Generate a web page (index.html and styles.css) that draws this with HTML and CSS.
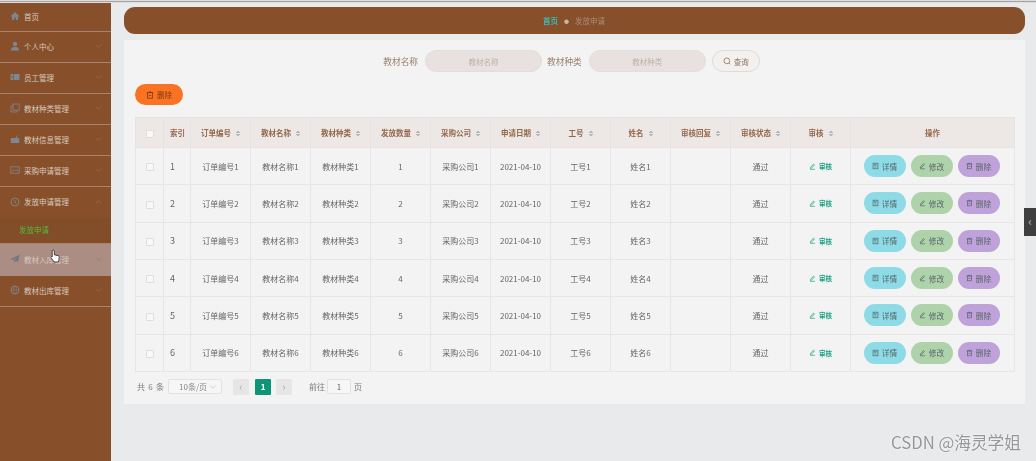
FILE: index.html
```html
<!DOCTYPE html>
<html lang="zh-CN">
<head>
<meta charset="utf-8">
<title>发放申请</title>
<link rel="stylesheet" href="styles.css">
</head>
<body>
<svg class="defs" width="0" height="0" aria-hidden="true">
  <symbol id="i-doc" viewBox="0 0 10 10"><rect x="1.5" y="1" width="7" height="8" fill="none" stroke="currentColor"/><path d="M3.500 6.500h3" stroke="currentColor"/><rect x="3.500" y="3" width="3" height="1.500" fill="none" stroke="currentColor" stroke-width=".7"/></symbol>
  <symbol id="i-edit" viewBox="0 0 10 10"><path d="M2 6.500 6.500 1.500l1.300 1.200-4.500 5H2zM1.500 9h7" fill="none" stroke="currentColor"/></symbol>
  <symbol id="i-del" viewBox="0 0 10 10"><rect x="2" y="2" width="6" height="7" fill="none" stroke="currentColor"/><path d="M3.800 1h2.400M1 2h8M3.500 5.500h3" fill="none" stroke="currentColor"/></symbol>
  <symbol id="i-chev" viewBox="0 0 10 6"><path d="M1 1l4 4 4-4" fill="none" stroke="currentColor"/></symbol>
</svg>
<div class="app">
  <div class="topline"></div>
  <div class="layout">
    <nav class="sidebar">
      <div class="item item-first"><svg class="ico" viewBox="0 0 10 10"><path d="M5 1 .5 5.500H2V9h2.200V6.500h1.600V9H8V5.500h1.500z" fill="currentColor"/></svg><span>首页</span></div>
      <div class="item"><svg class="ico" viewBox="0 0 10 10"><circle cx="5" cy="3" r="2.200" fill="currentColor"/><path d="M1 9.500c0-3 1.500-3.600 4-3.600s4 .6 4 3.600z" fill="currentColor"/></svg><span>个人中心</span><svg class="chev"><use href="#i-chev"/></svg></div>
      <div class="item"><svg class="ico" viewBox="0 0 10 10"><path d="M.5 2h9v6h-9z" fill="currentColor"/><path d="M3.500 2v6M.5 5h3" stroke="#87502b" stroke-width=".6"/></svg><span>员工管理</span><svg class="chev"><use href="#i-chev"/></svg></div>
      <div class="item"><svg class="ico" viewBox="0 0 10 10"><rect x="3" y="1" width="6.200" height="6.200" fill="none" stroke="currentColor" stroke-width=".8"/><path d="M3 3H1v6h6V7" fill="none" stroke="currentColor" stroke-width=".8"/></svg><span>教材种类管理</span><svg class="chev"><use href="#i-chev"/></svg></div>
      <div class="item"><svg class="ico" viewBox="0 0 10 10"><path d="M.8 4h8.400v5H.8z" fill="currentColor"/><path d="M6 4 7.500 1.500" stroke="currentColor"/></svg><span>教材信息管理</span><svg class="chev"><use href="#i-chev"/></svg></div>
      <div class="item"><svg class="ico" viewBox="0 0 10 10"><rect x=".8" y="1.800" width="8.400" height="6.400" fill="none" stroke="currentColor" stroke-width=".8"/><path d="M2 7l2-2.500L5.500 6 7 4.500 8.500 7" fill="none" stroke="currentColor" stroke-width=".7"/></svg><span>采购申请管理</span><svg class="chev"><use href="#i-chev"/></svg></div>
      <div class="item item-open"><svg class="ico" viewBox="0 0 10 10"><circle cx="5" cy="5" r="4" fill="none" stroke="currentColor" stroke-width=".9"/><path d="M5 3v3h1.500" fill="none" stroke="currentColor" stroke-width=".8"/></svg><span>发放申请管理</span><svg class="chev chev-up"><use href="#i-chev"/></svg></div>
      <div class="submenu"><span>发放申请</span></div>
      <div class="item item-hover"><svg class="ico" viewBox="0 0 10 10"><path d="M9.500.8.5 5l2.600 1L8 2.500 4 6.600V9l1.600-2L8 8z" fill="currentColor"/></svg><span>教材入库管理</span><svg class="chev"><use href="#i-chev"/></svg></div>
      <div class="item"><svg class="ico" viewBox="0 0 10 10"><circle cx="5" cy="5" r="4" fill="none" stroke="currentColor" stroke-width=".9"/><path d="M1 5h8M5 1c-2 2.500-2 5.500 0 8M5 1c2 2.500 2 5.500 0 8" fill="none" stroke="currentColor" stroke-width=".5"/></svg><span>教材出库管理</span><svg class="chev"><use href="#i-chev"/></svg></div>
    </nav>
    <main class="main">
      <header class="crumb"><span class="crumb-home">首页</span><span class="crumb-sep">●</span><span class="crumb-cur">发放申请</span></header>
      <section class="card">
        <form class="search">
          <label class="search-label">教材名称</label>
          <div class="search-input">教材名称</div>
          <label class="search-label">教材种类</label>
          <div class="search-input">教材种类</div>
          <button class="search-btn" type="button"><svg class="s-ico" viewBox="0 0 10 10"><circle cx="4.800" cy="4.800" r="3.600" fill="none" stroke="currentColor"/><path d="M7.500 7.500 9 9" stroke="currentColor"/></svg>查询</button>
        </form>
        <div class="tools"><button class="del-main" type="button"><svg class="s-ico"><use href="#i-del"/></svg>删除</button></div>
        <table class="grid">
          <colgroup><col class="c-f"><col class="c-s"><col class="c-m"><col class="c-m"><col class="c-m"><col class="c-m"><col class="c-m"><col class="c-m"><col class="c-m"><col class="c-m"><col class="c-m"><col class="c-m"><col class="c-m"><col class="c-l"></colgroup>
          <thead>
            <tr>
              <th><i class="check"></i></th>
              <th class="left">索引</th>
              <th>订单编号<i class="sort"></i></th>
              <th>教材名称<i class="sort"></i></th>
              <th>教材种类<i class="sort"></i></th>
              <th>发放数量<i class="sort"></i></th>
              <th>采购公司<i class="sort"></i></th>
              <th>申请日期<i class="sort"></i></th>
              <th>工号<i class="sort"></i></th>
              <th>姓名<i class="sort"></i></th>
              <th>审核回复<i class="sort"></i></th>
              <th>审核状态<i class="sort"></i></th>
              <th>审核<i class="sort"></i></th>
              <th>操作</th>
            </tr>
          </thead>
          <tbody>
            <tr><td><i class="check"></i></td><td class="left">1</td><td>订单编号1</td><td>教材名称1</td><td>教材种类1</td><td>1</td><td>采购公司1</td><td>2021-04-10</td><td>工号1</td><td>姓名1</td><td></td><td>通过</td><td><span class="audit"><svg class="a-ico"><use href="#i-edit"/></svg>审核</span></td><td><div class="ops"><button class="op op-a" type="button"><svg class="b-ico"><use href="#i-doc"/></svg>详情</button><button class="op op-b" type="button"><svg class="b-ico"><use href="#i-edit"/></svg>修改</button><button class="op op-c" type="button"><svg class="b-ico"><use href="#i-del"/></svg>删除</button></div></td></tr>
            <tr><td><i class="check"></i></td><td class="left">2</td><td>订单编号2</td><td>教材名称2</td><td>教材种类2</td><td>2</td><td>采购公司2</td><td>2021-04-10</td><td>工号2</td><td>姓名2</td><td></td><td>通过</td><td><span class="audit"><svg class="a-ico"><use href="#i-edit"/></svg>审核</span></td><td><div class="ops"><button class="op op-a" type="button"><svg class="b-ico"><use href="#i-doc"/></svg>详情</button><button class="op op-b" type="button"><svg class="b-ico"><use href="#i-edit"/></svg>修改</button><button class="op op-c" type="button"><svg class="b-ico"><use href="#i-del"/></svg>删除</button></div></td></tr>
            <tr><td><i class="check"></i></td><td class="left">3</td><td>订单编号3</td><td>教材名称3</td><td>教材种类3</td><td>3</td><td>采购公司3</td><td>2021-04-10</td><td>工号3</td><td>姓名3</td><td></td><td>通过</td><td><span class="audit"><svg class="a-ico"><use href="#i-edit"/></svg>审核</span></td><td><div class="ops"><button class="op op-a" type="button"><svg class="b-ico"><use href="#i-doc"/></svg>详情</button><button class="op op-b" type="button"><svg class="b-ico"><use href="#i-edit"/></svg>修改</button><button class="op op-c" type="button"><svg class="b-ico"><use href="#i-del"/></svg>删除</button></div></td></tr>
            <tr><td><i class="check"></i></td><td class="left">4</td><td>订单编号4</td><td>教材名称4</td><td>教材种类4</td><td>4</td><td>采购公司4</td><td>2021-04-10</td><td>工号4</td><td>姓名4</td><td></td><td>通过</td><td><span class="audit"><svg class="a-ico"><use href="#i-edit"/></svg>审核</span></td><td><div class="ops"><button class="op op-a" type="button"><svg class="b-ico"><use href="#i-doc"/></svg>详情</button><button class="op op-b" type="button"><svg class="b-ico"><use href="#i-edit"/></svg>修改</button><button class="op op-c" type="button"><svg class="b-ico"><use href="#i-del"/></svg>删除</button></div></td></tr>
            <tr><td><i class="check"></i></td><td class="left">5</td><td>订单编号5</td><td>教材名称5</td><td>教材种类5</td><td>5</td><td>采购公司5</td><td>2021-04-10</td><td>工号5</td><td>姓名5</td><td></td><td>通过</td><td><span class="audit"><svg class="a-ico"><use href="#i-edit"/></svg>审核</span></td><td><div class="ops"><button class="op op-a" type="button"><svg class="b-ico"><use href="#i-doc"/></svg>详情</button><button class="op op-b" type="button"><svg class="b-ico"><use href="#i-edit"/></svg>修改</button><button class="op op-c" type="button"><svg class="b-ico"><use href="#i-del"/></svg>删除</button></div></td></tr>
            <tr><td><i class="check"></i></td><td class="left">6</td><td>订单编号6</td><td>教材名称6</td><td>教材种类6</td><td>6</td><td>采购公司6</td><td>2021-04-10</td><td>工号6</td><td>姓名6</td><td></td><td>通过</td><td><span class="audit"><svg class="a-ico"><use href="#i-edit"/></svg>审核</span></td><td><div class="ops"><button class="op op-a" type="button"><svg class="b-ico"><use href="#i-doc"/></svg>详情</button><button class="op op-b" type="button"><svg class="b-ico"><use href="#i-edit"/></svg>修改</button><button class="op op-c" type="button"><svg class="b-ico"><use href="#i-del"/></svg>删除</button></div></td></tr>
          </tbody>
        </table>
        <div class="pager">
          <span class="total">共 6 条</span>
          <div class="size">10条/页<svg class="size-chev"><use href="#i-chev"/></svg></div>
          <div class="pg pg-nav">‹</div>
          <div class="pg pg-on">1</div>
          <div class="pg pg-nav">›</div>
          <span class="goto">前往</span>
          <div class="jump">1</div>
          <span>页</span>
        </div>
      </section>
    </main>
  </div>
  <div class="side-tab">‹</div>
  <svg class="cursor" viewBox="0 0 12 15"><path d="M3.500 1c.8 0 1.200.5 1.200 1.200v4l4 .9c1 .3 1.500.8 1.400 1.800l-.5 3.600-.6 1.500H4.500L1 9.300c-.5-.8.4-1.500 1.200-1l.2.200V2.200C2.400 1.500 2.800 1 3.500 1z" fill="#fff" stroke="#222" stroke-width=".9"/></svg>
  <div class="mark">CSDN @海灵学姐</div>
</div>
</body>
</html>
```
FILE: styles.css
```css
* { box-sizing: border-box; }
html, body { margin: 0; padding: 0; }
body {
  width: 1036px;
  height: 461px;
  overflow: hidden;
  background: #e9eaec;
  font-family: "Noto Sans CJK SC", "Liberation Sans", sans-serif;
}
.defs { position: absolute; }
.app {
  position: relative;
  width: 1036px;
  height: 461px;
  overflow: hidden;
  filter: blur(0.6px);
}
.topline {
  height: 3px;
  background: linear-gradient(#dcdcdc 0, #dcdcdc 1px, #a5a2a0 1px, #a5a2a0 2px, #dfdfdf 2px);
}
.layout { display: flex; height: 458px; }

.sidebar {
  flex: none;
  width: 111px;
  background: #87502b;
  color: #d6c9bf;
  font-size: 7.5px;
}
.item {
  display: flex;
  align-items: center;
  height: 31px;
  padding: 0 9px 2px 10px;
  border-bottom: 1px solid #a8836a;
}
.item-first { height: 29px; }
.item span { flex: 1; }
.ico { width: 10px; height: 10px; margin-right: 4px; color: #7d8793; flex: none; }
.chev { width: 7px; height: 4px; color: #9d7253; flex: none; }
.chev-up { transform: rotate(180deg); }
.item-open { border-bottom: 0; }
.submenu {
  display: flex;
  align-items: center;
  height: 26px;
  padding: 0 0 2px 19px;
  background: #824d29;
  color: #53b53a;
  border-bottom: 1px solid #a8836a;
  font-size: 7.5px;
}
.item-hover { background: #ab8d84; border-bottom: 0; height: 32px; }
.item-hover .ico { color: #6d7885; }

.main { flex: 1; padding: 4px 11px 0 13px; min-width: 0; }
.crumb {
  display: flex;
  align-items: center;
  justify-content: center;
  gap: 6px;
  height: 27px;
  padding-right: 1px;
  background: #87502b;
  border-radius: 11px;
  font-size: 7.5px;
}
.crumb-home { color: #3db8b4; font-weight: bold; }
.crumb-sep { color: #c9b6a8; font-size: 5px; }
.crumb-cur { color: #ab8c79; }

.card {
  margin-top: 6px;
  padding: 10px 11px 10px;
  height: 364px;
  background: #f3f3f3;
}
.search {
  display: flex;
  align-items: center;
  justify-content: center;
  height: 22px;
  padding-right: 6px;
}
.search-label { color: #9b8272; font-size: 8.700px; margin-right: 7px; }
.search-input {
  width: 117px;
  height: 22px;
  margin-right: 5px;
  line-height: 21px;
  text-align: center;
  background: #e9e1df;
  border: 1px solid #e4dedb;
  border-radius: 11px;
  color: #bcb0ab;
  font-size: 7.5px;
}
.search-btn {
  display: flex;
  align-items: center;
  justify-content: center;
  gap: 3px;
  width: 48px;
  height: 22px;
  margin-left: 1px;
  padding: 0;
  background: #f3f0ee;
  border: 1px solid #dedbd8;
  border-radius: 11px;
  color: #8b7464;
  font: inherit;
  font-size: 7.5px;
}
.s-ico { width: 8px; height: 8px; flex: none; }
.tools { margin-top: 12px; height: 21px; }
.del-main {
  display: flex;
  align-items: center;
  justify-content: center;
  gap: 3px;
  width: 48px;
  height: 21px;
  padding: 0;
  background: #f97323;
  border: 0;
  border-radius: 11px;
  color: #7a3a18;
  font: inherit;
  font-size: 7.5px;
}
.grid {
  margin-top: 12px;
  width: 879px;
  table-layout: fixed;
  border-collapse: collapse;
  font-size: 8px;
  color: #666;
}
.c-f { width: 28px; }
.c-s { width: 27px; }
.c-m { width: 60px; }
.c-l { width: 164px; }
.grid th, .grid td {
  padding: 0;
  text-align: center;
  border: 1px solid #e6e6e6;
  font-weight: normal;
}
.grid thead tr { height: 30px; }
.grid tbody tr { height: 37.33px; }
.grid th {
  background: #ede8e5;
  color: #93674b;
  font-size: 7.5px;
  font-weight: bold;
  border-color: #e6e3e3;
}
.grid .left { text-align: left; padding-left: 6px; }
.grid td.left { font-size: 9px; }
.check {
  display: inline-block;
  width: 8px;
  height: 8px;
  vertical-align: middle;
  background: #f8f8f8;
  border: 1px solid #dedede;
  border-radius: 1px;
}
.sort {
  display: inline-block;
  width: 4px;
  height: 7px;
  margin-left: 5px;
  vertical-align: -1px;
  background:
    linear-gradient(to bottom right, transparent 50%, #b4b6bb 50%) 0 0 / 2px 3px no-repeat,
    linear-gradient(to bottom left, transparent 50%, #b4b6bb 50%) 2px 0 / 2px 3px no-repeat,
    linear-gradient(to top right, transparent 50%, #b4b6bb 50%) 0 4px / 2px 3px no-repeat,
    linear-gradient(to top left, transparent 50%, #b4b6bb 50%) 2px 4px / 2px 3px no-repeat;
}
.audit {
  display: inline-flex;
  align-items: center;
  gap: 3px;
  color: #17a184;
  font-size: 6.500px;
  font-weight: bold;
}
.a-ico { width: 7px; height: 7px; }
.ops { display: flex; justify-content: center; gap: 5px; padding-right: 2px; }
.op {
  display: flex;
  align-items: center;
  justify-content: center;
  gap: 3px;
  width: 42px;
  height: 22px;
  padding: 0;
  border: 0;
  border-radius: 11px;
  color: #56666a;
  font: inherit;
  font-size: 7.700px;
}
.op-a { background: #8ddbe7; }
.op-b { background: #aed3ab; }
.op-c { background: #c0a2da; }
.b-ico { width: 7px; height: 8px; flex: none; }

.pager {
  display: flex;
  align-items: center;
  height: 16px;
  margin-top: 7px;
  padding-left: 2px;
  color: #7b7b7b;
  font-size: 8px;
}
.total { width: 31px; word-spacing: 1.500px; white-space: nowrap; }
.size {
  display: flex;
  align-items: center;
  justify-content: space-between;
  width: 54px;
  height: 15px;
  padding: 0 5px 0 10px;
  background: #f6f6f6;
  border: 1px solid #e2e2e2;
  border-radius: 2px;
  color: #888;
}
.size-chev { width: 6px; height: 4px; color: #b5b5b5; }
.pg {
  width: 16px;
  height: 16px;
  line-height: 15px;
  text-align: center;
  border-radius: 1px;
}
.pg-nav { background: #e6e6e6; color: #aaa; font-size: 11px; }
.size + .pg { margin-left: 11px; }
.pg-on { margin: 0 5px 0 6px; background: #0e9577; color: #fff; font-weight: bold; font-size: 8px; }
.goto { margin-left: 17px; }
.jump {
  width: 24px;
  height: 15px;
  margin: 0 3px 0 2px;
  line-height: 13px;
  text-align: center;
  background: #f6f6f6;
  border: 1px solid #e2e2e2;
  border-radius: 2px;
  color: #666;
}

.side-tab {
  position: absolute;
  top: 208px;
  right: 0;
  width: 12px;
  height: 28px;
  line-height: 25px;
  text-align: center;
  background: #3f3f3f;
  color: #bbb;
  font-size: 12px;
}
.cursor { position: absolute; left: 50px; top: 249px; width: 11px; height: 14px; }
.mark {
  position: absolute;
  top: 433px;
  right: 15px;
  color: #979797;
  font-size: 16.700px;
  line-height: 19px;
  text-shadow: 0 0 2px #fff;
  white-space: nowrap;
}
```
